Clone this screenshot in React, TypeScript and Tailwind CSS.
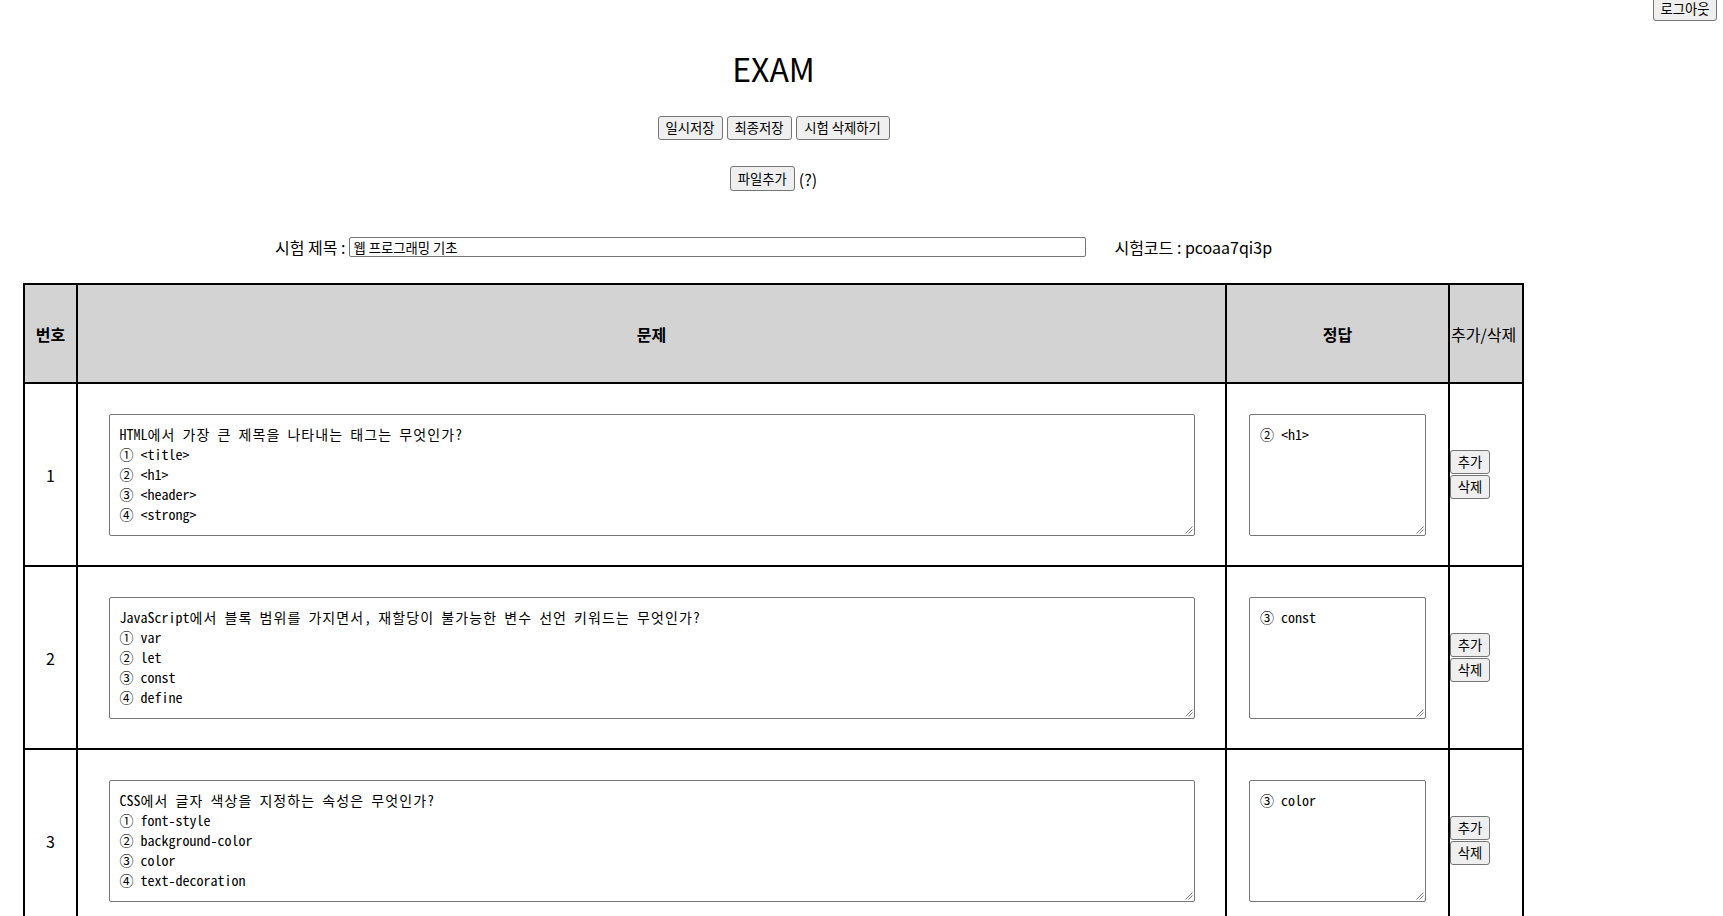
import React from "react";

const rows = [
  {
    n: 1,
    q: "HTML에서 가장 큰 제목을 나타내는 태그는 무엇인가?\n① <title>\n② <h1>\n③ <header>\n④ <strong>",
    a: "② <h1>",
  },
  {
    n: 2,
    q: "JavaScript에서 블록 범위를 가지면서, 재할당이 불가능한 변수 선언 키워드는 무엇인가?\n① var\n② let\n③ const\n④ define",
    a: "③ const",
  },
  {
    n: 3,
    q: "CSS에서 글자 색상을 지정하는 속성은 무엇인가?\n① font-style\n② background-color\n③ color\n④ text-decoration",
    a: "③ color",
  },
];

const btn =
  "inline-flex items-center justify-center h-[24px] bg-[#efefef] border border-[#767676] rounded-[3px] text-[13.33px] text-black leading-none";

function MonoText({ text }: { text: string }) {
  const parts = text.split(/([\uAC00-\uD7A3]+)/);
  return (
    <>
      {parts.map((s, i) =>
        /[\uAC00-\uD7A3]/.test(s) ? (
          <span key={i} className="tracking-[1.1px]">
            {s}
          </span>
        ) : (
          <React.Fragment key={i}>{s}</React.Fragment>
        )
      )}
    </>
  );
}

function Area({ text, w }: { text: string; w: string }) {
  return (
    <div
      className={`relative block h-[122px] ${w} overflow-hidden whitespace-pre rounded-[2px] border border-[#767676] bg-white px-[10px] pt-[9px] pb-[11px] text-[14px] leading-[20px] text-black font-['Noto_Sans_Mono_CJK_KR','Noto_Sans_CJK_KR',monospace]`}
    >
      <MonoText text={text} />
      <svg
        className="absolute bottom-[1px] right-[1px]"
        width="9"
        height="9"
        viewBox="0 0 9 9"
      >
        <path d="M8.5 1.5 L1.5 8.5 M8.5 4.5 L4.5 8.5" stroke="#7a7a7a" strokeWidth="1" fill="none" />
      </svg>
    </div>
  );
}

export default function App() {
  return (
    <div className="relative h-[916px] overflow-hidden bg-white text-black font-['Noto_Sans_CJK_KR','Noto_Sans',sans-serif]">
      <button className={`${btn} absolute right-[6px] top-[-3px] w-[64px]`}>로그아웃</button>

      <div className="w-[1547px] px-[23px]">
        <h1 className="mt-[45px] h-[46px] text-center text-[32px] leading-[46px] font-normal">EXAM</h1>

        <div className="mt-[25px] flex justify-center gap-[4px]">
          <button className={`${btn} w-[65px]`}>일시저장</button>
          <button className={`${btn} w-[65px]`}>최종저장</button>
          <button className={`${btn} w-[94px]`}>시험 삭제하기</button>
        </div>

        <div className="mt-[26px] flex h-[25px] items-center justify-center gap-[4px]">
          <button className={`${btn} h-[25px] w-[65px]`}>파일추가</button>
          <span className="text-[16px]">(?)</span>
        </div>

        <div className="mt-[46px] flex h-[20px] items-center justify-center text-[16px]">
          <span>시험 제목 :</span>
          <input
            readOnly
            defaultValue="웹 프로그래밍 기초"
            className="ml-[4px] h-[20px] w-[737px] rounded-[2px] border border-[#767676] px-[3px] text-[13.33px] outline-none"
          />
          <span className="ml-[28px]">시험코드 : pcoaa7qi3p</span>
        </div>

        <div className="mt-[26px] grid grid-cols-[51px_1147px_221px_72px] gap-[2px] border-2 border-black bg-black">
          <div className="flex h-[97px] items-center justify-center bg-[#d3d3d3] text-[16px] font-bold">번호</div>
          <div className="flex h-[97px] items-center justify-center bg-[#d3d3d3] text-[16px] font-bold">문제</div>
          <div className="flex h-[97px] items-center justify-center bg-[#d3d3d3] text-[16px] font-bold">정답</div>
          <div className="flex h-[97px] items-center justify-start bg-[#d3d3d3] pl-[1px] text-[16px] font-normal whitespace-nowrap">추가/삭제</div>

          {rows.map((r) => (
            <React.Fragment key={r.n}>
              <div className="flex h-[181px] items-center justify-center bg-white text-[16px]">{r.n}</div>
              <div className="flex h-[181px] items-center justify-center bg-white">
                <Area text={r.q} w="w-[1086px]" />
              </div>
              <div className="flex h-[181px] items-center justify-center bg-white">
                <Area text={r.a} w="w-[177px]" />
              </div>
              <div className="flex h-[181px] flex-col items-start justify-center gap-[1px] bg-white">
                <button className={`${btn} w-[40px]`}>추가</button>
                <button className={`${btn} w-[40px]`}>삭제</button>
              </div>
            </React.Fragment>
          ))}
        </div>
      </div>
    </div>
  );
}
